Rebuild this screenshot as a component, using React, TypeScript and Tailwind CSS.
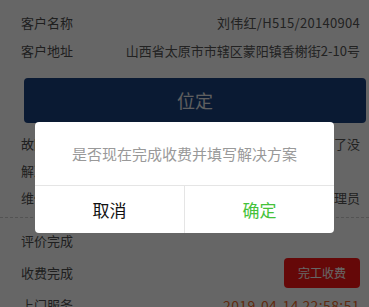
import React from "react";

const font = { fontFamily: '"Noto Sans CJK SC", "Noto Sans", sans-serif' };

function Row({ left, right, h = "h-[28px]", rightClass = "text-[#555]" }: { left: string; right?: React.ReactNode; h?: string; rightClass?: string }) {
  return (
    <div className={`flex items-center justify-between ${h} pl-[21px] pr-[9px] text-[13px]`}>
      <span className="text-[#4f4f4f] whitespace-nowrap">{left}</span>
      {typeof right === "string" ? <span className={`${rightClass} whitespace-nowrap`}>{right}</span> : right}
    </div>
  );
}

export default function App() {
  return (
    <div className="relative w-[369px] h-[307px] overflow-hidden bg-white" style={font}>
      <div className="pt-[9px]">
        <Row left="客户名称" right="刘伟红/H515/20140904" rightClass="text-[#555] tracking-[0.3px]" />
        <Row left="客户地址" right="山西省太原市市辖区蒙阳镇香榭街2-10号" />
        <div className="ml-[24px] mr-[3px] mt-[13px] h-[45px] rounded-[4px] bg-[#194180] flex items-center justify-center text-[#eeeeee] text-[18px]">
          位定
        </div>
        <div className="mt-[7px]">
          <Row h="h-[27px]" left="故障描述" right="不制冷了没" />
          <Row h="h-[27px]" left="解决方案" />
          <Row h="h-[27px]" left="维修人员" right="管理员" />
        </div>
        <div className="mt-[6px] border-t border-dashed border-[#cfcfcf]" />
        <div className="pt-[7px]">
          <Row h="h-[32px]" left="评价完成" />
          <Row
            h="h-[32px]"
            left="收费完成"
            right={
              <span className="w-[76px] h-[30px] rounded-[4px] bg-[#fc1616] text-white text-[12px] flex items-center justify-center">
                完工收费
              </span>
            }
          />
          <Row h="h-[32px]" left="上门服务" right="2019-04-14 22:58:51" rightClass="text-[#f26a28] text-[14px] tracking-[0.4px]" />
        </div>
      </div>

      <div className="absolute inset-0 bg-black/60" />

      <div className="absolute left-[35px] top-[122px] w-[299px] h-[111px] bg-white rounded-[4px] flex flex-col">
        <div className="h-[63px] flex items-center justify-center text-[15px] text-[#999] pt-[2px]">
          是否现在完成收费并填写解决方案
        </div>
        <div className="flex-1 flex border-t border-[#e5e5e5]">
          <div className="flex-1 flex items-center justify-center text-[17px] text-[#111] border-r border-[#e5e5e5]">取消</div>
          <div className="flex-1 flex items-center justify-center text-[17px] text-[#45c23a]">确定</div>
        </div>
      </div>
    </div>
  );
}
